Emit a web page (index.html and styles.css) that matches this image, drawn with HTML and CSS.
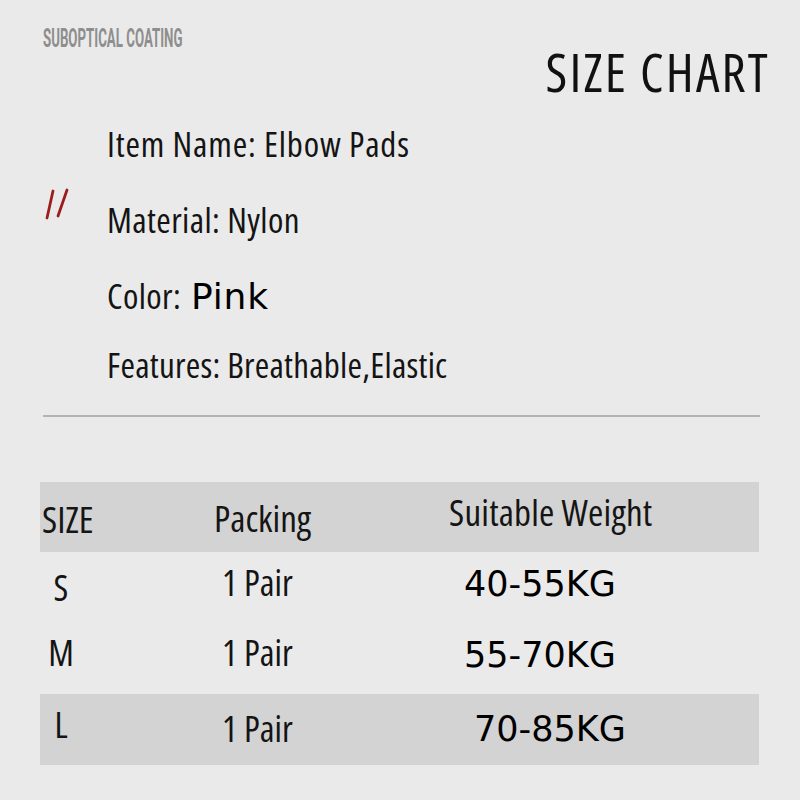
FILE: index.html
```html
<!DOCTYPE html>
<html>
<head>
<meta charset="utf-8">
<link rel="stylesheet" href="styles.css">
</head>
<body>
<div class="page">
  <header class="top">
    <div class="brand"><span class="brand-text">SUBOPTICAL COATING</span></div>
    <h1 class="title">SIZE CHART</h1>
  </header>

  <section class="info">
    <div class="marker">
      <svg width="26" height="32" viewBox="0 0 26 32">
        <line x1="2" y1="30" x2="8" y2="3" stroke="#9c1d1d" stroke-width="2.8" stroke-linecap="round"/>
        <line x1="13" y1="28" x2="22" y2="2" stroke="#9c1d1d" stroke-width="2.8" stroke-linecap="round"/>
      </svg>
    </div>
    <div class="lines">
      <div class="line line-wide">Item Name: Elbow Pads</div>
      <div class="line">Material: Nylon</div>
      <div class="line">Color: <span class="pink">Pink</span></div>
      <div class="line line-last">Features: Breathable,Elastic</div>
    </div>
  </section>

  <hr class="divider">

  <div class="table">
    <div class="row row-head">
      <div class="h-size">SIZE</div>
      <div class="h-pack">Packing</div>
      <div class="h-wt">Suitable Weight</div>
    </div>
    <div class="row row-s">
      <div class="size">S</div>
      <div class="pack">1 Pair</div>
      <div class="wt">40-55KG</div>
    </div>
    <div class="row row-m">
      <div class="size">M</div>
      <div class="pack">1 Pair</div>
      <div class="wt">55-70KG</div>
    </div>
    <div class="row row-l">
      <div class="size">L</div>
      <div class="pack">1 Pair</div>
      <div class="wt">70-85KG</div>
    </div>
  </div>
</div>
</body>
</html>
```

FILE: styles.css
```css
* { box-sizing: border-box; }
html, body { margin: 0; padding: 0; }
body { background: #e9e9e9; }

.page {
  width: 800px;
  height: 800px;
  overflow: hidden;
  background: #eaeaea;
  font-family: "Open Sans", "Noto Sans", sans-serif;
  color: #141414;
}

.top {
  display: flex;
  justify-content: space-between;
  align-items: flex-start;
  padding: 0 30px 0 43px;
  height: 102px;
}

.brand {
  margin-top: 25px;
  height: 26px;
  line-height: 26px;
  font-family: Roboto, "Liberation Sans", sans-serif;
  font-weight: 700;
  font-size: 26px;
  color: #8e8e8e;
  width: 160px;
  white-space: nowrap;
}
.brand-text {
  display: inline-block;
  transform: scaleX(0.51);
  transform-origin: left center;
}

.title {
  margin: 42px 0 0 0;
  font-size: 53px;
  font-weight: 400;
  line-height: 60px;
  font-stretch: 75%;
  letter-spacing: 2.2px;
  color: #111;
  white-space: nowrap;
}

.info {
  display: flex;
  padding-left: 45px;
  margin-top: 4px;
}
.marker {
  width: 62px;
  padding-top: 82px;
}
.marker svg { display: block; }

.lines { display: flex; flex-direction: column; }
.line {
  height: 76px;
  line-height: 76px;
  font-size: 35px;
  font-stretch: 75%;
  letter-spacing: 0.4px;
  white-space: nowrap;
}
.line-wide { letter-spacing: 0.85px; }
.line-last { margin-top: -7px; letter-spacing: 0.25px; }
.pink {
  font-family: "DejaVu Sans", sans-serif;
  font-size: 36px;
  font-stretch: 100%;
  letter-spacing: 0.8px;
  margin-left: 3px;
  color: #000;
}

.divider {
  margin: 12px 40px 0 43px;
  border: 0;
  border-top: 2px solid #b4b4b4;
  height: 0;
}

.table {
  margin: 65px 41px 0 40px;
}
.row {
  display: grid;
  grid-template-columns: 174px 235px 1fr;
  align-items: start;
  height: 71px;
}
.row-head {
  height: 70px;
  background: #d3d3d3;
}
.row-l { background: #d3d3d3; }

.h-size, .h-pack, .h-wt {
  font-size: 37px;
  line-height: 37px;
  font-stretch: 75%;
  color: #151515;
  white-space: nowrap;
}
.h-size { padding: 18px 0 0 2px; }
.h-pack { padding-top: 17px; }
.h-wt { padding-top: 11px; letter-spacing: 0.2px; }

.size, .pack {
  font-size: 36px;
  line-height: 36px;
  font-stretch: 75%;
  padding-top: 12px;
  white-space: nowrap;
}
.size { width: 42px; text-align: center; }
.pack { padding-left: 8px; }
.wt {
  font-family: "DejaVu Sans", sans-serif;
  font-size: 35px;
  line-height: 35px;
  color: #000;
  padding: 15px 0 0 15px;
  white-space: nowrap;
}
.row-s .size { padding-top: 18px; }
.row-s .pack { padding-top: 13px; }
.row-l .size { padding-top: 13px; }
.row-l .pack { padding-top: 17px; }
.row-l .wt { padding: 18px 0 0 25px; }
```
